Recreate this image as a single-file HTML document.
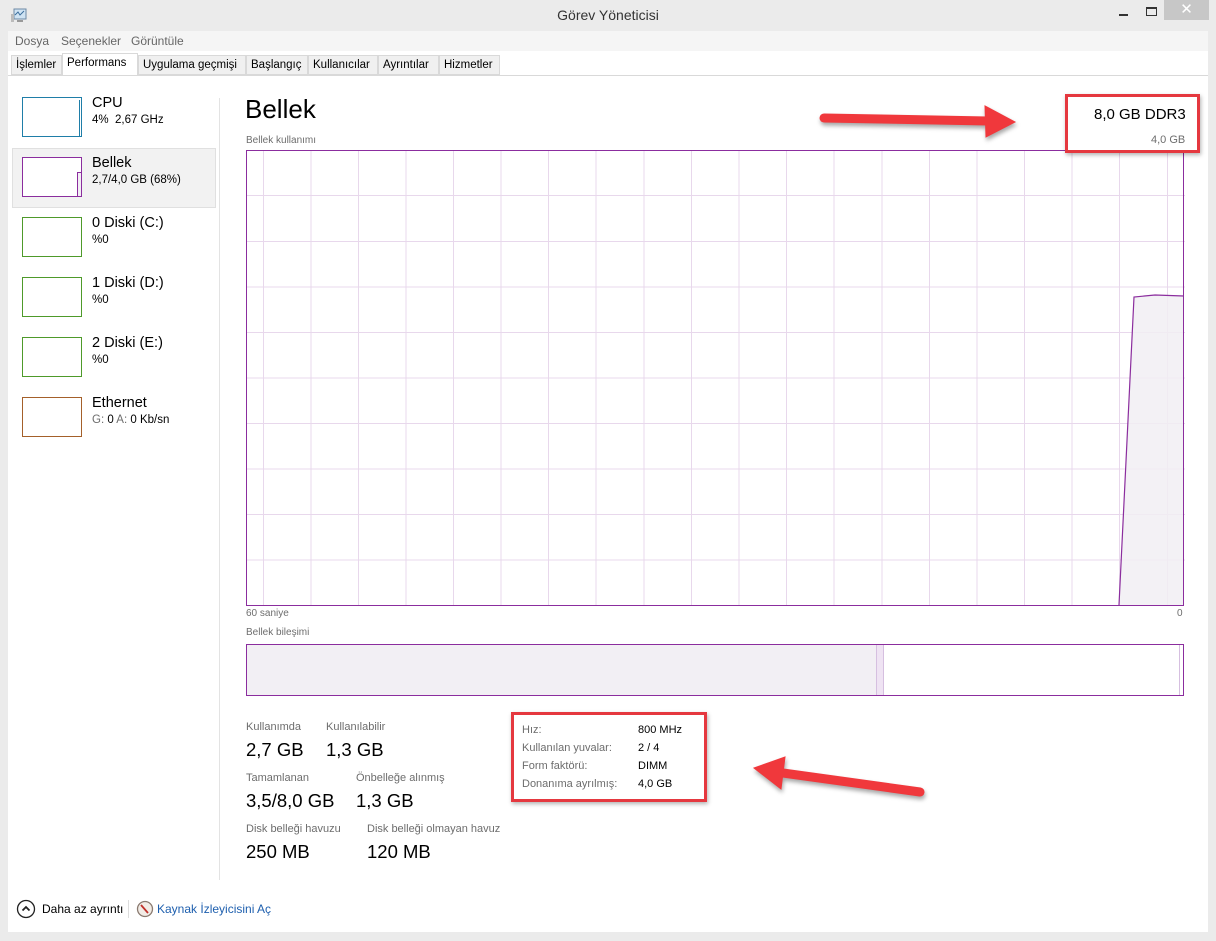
<!DOCTYPE html>
<html><head><meta charset="utf-8"><style>
*{margin:0;padding:0;box-sizing:border-box}
body{width:1216px;height:941px;background:#ebebeb;font-family:"Segoe UI","Liberation Sans","DejaVu Sans",sans-serif;position:relative;overflow:hidden;color:#000}
.a{position:absolute;white-space:nowrap}
.g{color:#6d6d6d}
.tab{position:absolute;top:55px;height:20px;border:1px solid #d9d9d9;background:#f0f0f0;font-size:11.5px;line-height:18px;padding:0 4px;white-space:nowrap;overflow:hidden}
.th{position:absolute;left:22px;width:60px;height:40px;background:#fff}
.t1{position:absolute;left:92px;font-size:14.5px;white-space:nowrap}
.t2{position:absolute;left:92px;font-size:11.5px;white-space:nowrap}
</style></head><body>
<div class="a" style="left:0;top:0;width:1216px;height:30px;background:#ebebeb"></div>
<svg class="a" style="left:10px;top:8px" width="18" height="16"><rect x="4" y="1" width="12" height="10" fill="#cfe3f3" stroke="#6d8aa5"/><polyline points="5,7 8,4 10,7 14,3" fill="none" stroke="#3a6d9c"/><rect x="1" y="6" width="3" height="8" fill="#bbb"/><rect x="7" y="12" width="6" height="2" fill="#999"/></svg>
<div class="a" style="left:0;top:7px;width:1216px;text-align:center;font-size:14px;color:#333">Görev Yöneticisi</div>
<div class="a" style="left:1119px;top:14px;width:9px;height:2px;background:#333"></div>
<div class="a" style="left:1146px;top:7px;width:11px;height:9px;border:1px solid #333;border-top-width:2px"></div>
<div class="a" style="left:1164px;top:0;width:45px;height:20px;background:#c7c7c7;color:#fff;text-align:center;font-size:15px;line-height:20px">✕</div>
<div class="a" style="left:8px;top:31px;width:1200px;height:20px;background:#f5f5f5"></div>
<div class="a" style="left:15px;top:34px;font-size:12px;color:#666">Dosya</div>
<div class="a" style="left:61px;top:34px;font-size:12px;color:#666">Seçenekler</div>
<div class="a" style="left:131px;top:34px;font-size:12px;color:#666">Görüntüle</div>
<div class="a" style="left:8px;top:51px;width:1200px;height:24px;background:#fff"></div>
<div class="tab" style="left:11px;width:51px">İşlemler</div>
<div class="tab" style="left:62px;top:53px;height:23px;width:76px;background:#fff;border-bottom:none">Performans</div>
<div class="tab" style="left:138px;width:108px">Uygulama geçmişi</div>
<div class="tab" style="left:246px;width:62px">Başlangıç</div>
<div class="tab" style="left:308px;width:70px">Kullanıcılar</div>
<div class="tab" style="left:378px;width:61px">Ayrıntılar</div>
<div class="tab" style="left:439px;width:61px">Hizmetler</div>
<div class="a" style="left:8px;top:75px;width:1200px;height:857px;background:#fff;border-top:1px solid #d9d9d9"></div>
<div class="a" style="left:219px;top:98px;width:1px;height:782px;background:#e3e3e3"></div>
<div class="a" style="left:12px;top:148px;width:204px;height:60px;background:#f2f2f2;border:1px solid #e0e0e0"></div>
<div class="th" style="top:97px;border:1px solid #1f7ea8"></div>
<div class="a" style="left:79px;top:100px;width:1px;height:36px;background:#1f7ea8"></div>
<div class="t1" style="top:95px">CPU</div><div class="t2" style="top:114px">4%&nbsp; 2,67 GHz</div>
<div class="th" style="top:157px;border:1px solid #8b2d9e"></div>
<div class="a" style="left:77px;top:172px;width:4px;height:24px;background:#f2eef4;border-left:1px solid #8b2d9e;border-top:1px solid #8b2d9e"></div>
<div class="t1" style="top:155px">Bellek</div><div class="t2" style="top:174px">2,7/4,0 GB (68%)</div>
<div class="th" style="top:217px;border:1px solid #4e9a2a"></div>
<div class="t1" style="top:215px">0 Diski (C:)</div><div class="t2" style="top:234px">%0</div>
<div class="th" style="top:277px;border:1px solid #4e9a2a"></div>
<div class="t1" style="top:275px">1 Diski (D:)</div><div class="t2" style="top:294px">%0</div>
<div class="th" style="top:337px;border:1px solid #4e9a2a"></div>
<div class="t1" style="top:335px">2 Diski (E:)</div><div class="t2" style="top:354px">%0</div>
<div class="th" style="top:397px;border:1px solid #a4602a"></div>
<div class="t1" style="top:395px">Ethernet</div><div class="t2" style="top:414px"><span class="g">G:</span> 0 <span class="g">A:</span> 0 Kb/sn</div>
<div class="a" style="left:245px;top:94px;font-size:26px">Bellek</div>
<div class="a" style="left:1094px;top:106px;font-size:15px">8,0 GB DDR3</div>
<div class="a g" style="left:1151px;top:134px;font-size:11px">4,0 GB</div>
<div class="a g" style="left:246px;top:135px;font-size:10px">Bellek kullanımı</div>
<svg class="a" style="left:246px;top:150px" width="939" height="456">
<g stroke="#e8d8ec" stroke-width="1">
<line x1="17.5" y1="0" x2="17.5" y2="456"/><line x1="65" y1="0" x2="65" y2="456"/><line x1="112.5" y1="0" x2="112.5" y2="456"/><line x1="160" y1="0" x2="160" y2="456"/><line x1="207.5" y1="0" x2="207.5" y2="456"/><line x1="255" y1="0" x2="255" y2="456"/><line x1="302.5" y1="0" x2="302.5" y2="456"/><line x1="350" y1="0" x2="350" y2="456"/><line x1="398" y1="0" x2="398" y2="456"/><line x1="445.5" y1="0" x2="445.5" y2="456"/><line x1="493" y1="0" x2="493" y2="456"/><line x1="540.5" y1="0" x2="540.5" y2="456"/><line x1="588" y1="0" x2="588" y2="456"/><line x1="636" y1="0" x2="636" y2="456"/><line x1="683.5" y1="0" x2="683.5" y2="456"/><line x1="731" y1="0" x2="731" y2="456"/><line x1="778.5" y1="0" x2="778.5" y2="456"/><line x1="826" y1="0" x2="826" y2="456"/><line x1="873.5" y1="0" x2="873.5" y2="456"/><line x1="921.5" y1="0" x2="921.5" y2="456"/>
<line x1="0" y1="45.5" x2="939" y2="45.5"/><line x1="0" y1="91.5" x2="939" y2="91.5"/><line x1="0" y1="137" x2="939" y2="137"/><line x1="0" y1="182.5" x2="939" y2="182.5"/><line x1="0" y1="228" x2="939" y2="228"/><line x1="0" y1="273.5" x2="939" y2="273.5"/><line x1="0" y1="319" x2="939" y2="319"/><line x1="0" y1="364.5" x2="939" y2="364.5"/><line x1="0" y1="410" x2="939" y2="410"/>
</g>
<polygon points="873,455 888,147 909,145 938,146 938,455" fill="#f1eef3" fill-opacity="0.85"/>
<polyline points="873,455 888,147 909,145 938,146" fill="none" stroke="#8b2d9e" stroke-width="1.2"/>
<rect x="0.5" y="0.5" width="937" height="455" fill="none" stroke="#8b2d9e"/>
</svg>
<div class="a g" style="left:246px;top:608px;font-size:10px">60 saniye</div>
<div class="a g" style="left:1177px;top:608px;font-size:10px">0</div>
<div class="a g" style="left:246px;top:627px;font-size:10px">Bellek bileşimi</div>
<div class="a" style="left:246px;top:644px;width:938px;height:52px;border:1px solid #8b2d9e;background:#fff"></div>
<div class="a" style="left:247px;top:645px;width:629px;height:50px;background:#f2eff4"></div>
<div class="a" style="left:876px;top:645px;width:8px;height:50px;background:#efe3f3;border-left:1px solid #d6bfe0;border-right:1px solid #d6bfe0"></div>
<div class="a" style="left:1179px;top:645px;width:1px;height:50px;background:#d6bfe0"></div>
<div class="a g" style="left:246px;top:721px;font-size:11px">Kullanımda</div>
<div class="a g" style="left:326px;top:721px;font-size:11px">Kullanılabilir</div>
<div class="a" style="left:246px;top:739px;font-size:18.5px">2,7 GB</div>
<div class="a" style="left:326px;top:739px;font-size:18.5px">1,3 GB</div>
<div class="a g" style="left:246px;top:772px;font-size:11px">Tamamlanan</div>
<div class="a g" style="left:356px;top:772px;font-size:11px">Önbelleğe alınmış</div>
<div class="a" style="left:246px;top:790px;font-size:18.5px">3,5/8,0 GB</div>
<div class="a" style="left:356px;top:790px;font-size:18.5px">1,3 GB</div>
<div class="a g" style="left:246px;top:823px;font-size:11px">Disk belleği havuzu</div>
<div class="a g" style="left:367px;top:823px;font-size:11px">Disk belleği olmayan havuz</div>
<div class="a" style="left:246px;top:841px;font-size:18.5px">250 MB</div>
<div class="a" style="left:367px;top:841px;font-size:18.5px">120 MB</div>
<div class="a g" style="left:522px;top:721px;font-size:11px;line-height:18px">Hız:<br>Kullanılan yuvalar:<br>Form faktörü:<br>Donanıma ayrılmış:</div>
<div class="a" style="left:638px;top:721px;font-size:11px;line-height:18px">800 MHz<br>2 / 4<br>DIMM<br>4,0 GB</div>
<div class="a" style="left:1065px;top:94px;width:135px;height:59px;border:3px solid #e5383f;box-shadow:1px 2px 4px rgba(0,0,0,.3)"></div>
<div class="a" style="left:511px;top:712px;width:196px;height:90px;border:3px solid #e5383f;box-shadow:1px 2px 4px rgba(0,0,0,.3)"></div>
<svg class="a" style="left:740px;top:95px" width="290" height="60"><g fill="#f0383c" stroke="#f0383c" style="filter:drop-shadow(1px 3px 2px rgba(0,0,0,.35))"><line x1="84" y1="23" x2="248" y2="26" stroke-width="9" stroke-linecap="round"/><polygon points="245,11 275,27 246,42"/></g></svg>
<svg class="a" style="left:745px;top:745px" width="190" height="60"><g fill="#f0383c" stroke="#f0383c" style="filter:drop-shadow(1px 3px 2px rgba(0,0,0,.35))"><line x1="38" y1="28" x2="175" y2="47" stroke-width="9" stroke-linecap="round"/><polygon points="9,23 40,12 36,44"/></g></svg>
<svg class="a" style="left:16px;top:899px" width="20" height="20"><circle cx="10" cy="10" r="8.5" fill="none" stroke="#222" stroke-width="1.3"/><polyline points="6.5,11.5 10,8 13.5,11.5" fill="none" stroke="#222" stroke-width="1.8"/></svg>
<div class="a" style="left:42px;top:902px;font-size:12px">Daha az ayrıntı</div>
<div class="a" style="left:128px;top:900px;width:1px;height:18px;background:#ddd"></div>
<svg class="a" style="left:136px;top:900px" width="18" height="18"><circle cx="9" cy="9" r="7.5" fill="#f2ece6" stroke="#8a7a70" stroke-width="1.3"/><line x1="5" y1="5" x2="12" y2="13" stroke="#c0302a" stroke-width="1.8"/></svg>
<div class="a" style="left:157px;top:902px;font-size:12px;color:#1e5fae">Kaynak İzleyicisini Aç</div>
</body></html>
